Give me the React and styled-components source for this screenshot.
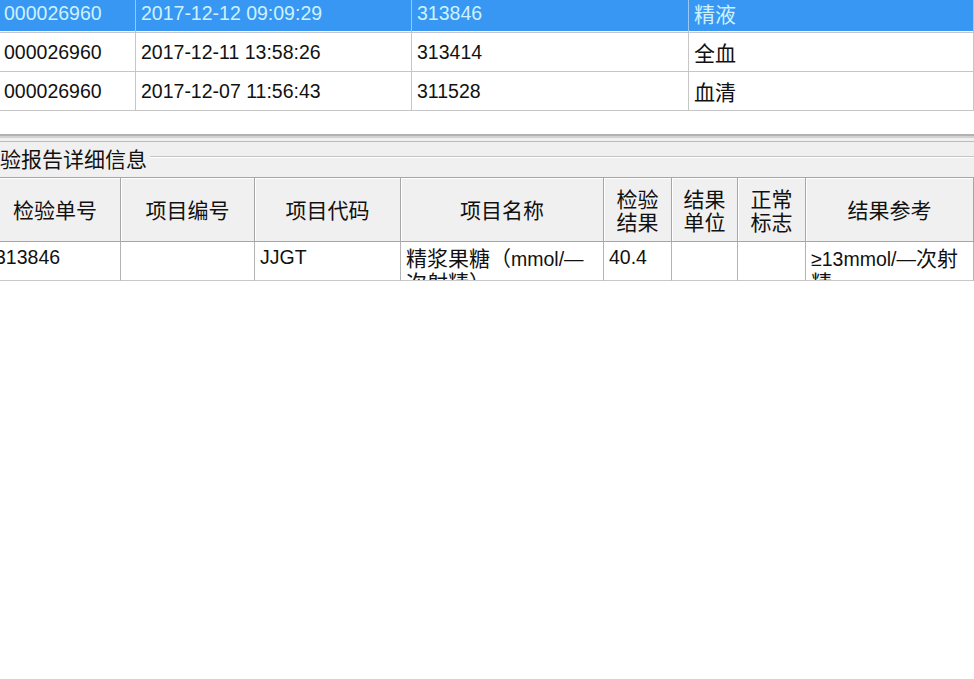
import React from 'react';
import styled, { createGlobalStyle } from 'styled-components';

const Global = createGlobalStyle`
  html, body { margin: 0; padding: 0; background: #fff; overflow: hidden; }
  body { font-family: "Liberation Sans", "Noto Sans CJK SC", sans-serif; color: #111; }
  * { box-sizing: border-box; }
`;

const Page = styled.div`
  width: 974px;
  height: 679px;
  overflow: hidden;
  display: flex;
  flex-direction: column;
  background: #fff;
`;

const ListGrid = styled.div`
  display: grid;
  grid-template-columns: 136px 276px 277px 1fr;
  margin-top: -6px;
  flex: none;
`;

const ListCell = styled.div`
  height: 39px;
  display: flex;
  align-items: center;
  padding-left: ${p => (p.$first ? 4 : 5)}px;
  font-size: 19.5px;
  white-space: nowrap;
  border-right: 1px solid ${p => (p.$sel ? '#9cc8f4' : '#c6c6c6')};
  border-bottom: 1px solid #c6c6c6;
  background: ${p => (p.$sel ? '#3797f3' : '#fff')};
  color: ${p => (p.$sel ? '#cdf2ff' : '#111')};
  box-shadow: ${p => (p.$sel ? 'inset 0 -1px 0 #fff' : 'none')};
`;

const Cjk = styled.span`
  font-family: "Noto Sans CJK SC", sans-serif;
  font-size: 21px;
`;

const WhiteGap = styled.div`
  height: 23px;
  flex: none;
  background: #fff;
`;

const Splitter = styled.div`
  height: 4px;
  flex: none;
  background: linear-gradient(#b2b2b2 0 2px, #d2d2d2 2px 4px);
`;

const Panel = styled.div`
  flex: none;
  background: #f0f0f0;
  padding-top: 3px;
  display: flex;
  flex-direction: column;
`;

const PanelRule = styled.div`
  height: 1px;
  background: #bcbcbc;
`;

const GroupHead = styled.div`
  height: 35px;
  display: flex;
  align-items: flex-start;
`;

const GroupTitle = styled.div`
  margin-left: -21px;
  margin-top: 4px;
  font-family: "Noto Sans CJK SC", sans-serif;
  font-size: 21px;
  line-height: 24px;
  white-space: nowrap;
  color: #111;
`;

const GroupLine = styled.div`
  flex: 1;
  margin-top: 14px;
  margin-left: 3px;
  height: 2px;
  border-top: 1px solid #c4c4c4;
  border-bottom: 1px solid #fff;
`;

const DetailGrid = styled.div`
  display: grid;
  grid-template-columns: 131px 134px 146px 203px 68px 66px 68px 168px;
  margin-left: -10px;
  border-top: 1px solid #a6a6a6;
`;

const HeadCell = styled.div`
  height: 64px;
  display: flex;
  align-items: center;
  justify-content: center;
  text-align: center;
  font-family: "Noto Sans CJK SC", sans-serif;
  font-size: 21px;
  line-height: 23px;
  background: #f0f0f0;
  border-right: 1px solid #a6a6a6;
  border-bottom: 1px solid #a6a6a6;
  box-shadow: inset 1px 1px 0 #fff;
  color: #111;
`;

const HeadLine = styled.div`
  white-space: nowrap;
`;

const DataCell = styled.div`
  height: 39px;
  overflow: hidden;
  padding: 4px 4px 0 5px;
  font-size: 19.5px;
  line-height: 22px;
  background: #fff;
  border-right: 1px solid #b4b4b4;
  border-bottom: 1px solid #c8c8c8;
  color: #111;
`;

const Filler = styled.div`
  flex: 1;
  background: #fff;
`;

const listRows = [
  { id: '000026960', time: '2017-12-12 09:09:29', no: '313846', kind: '精液', sel: true },
  { id: '000026960', time: '2017-12-11 13:58:26', no: '313414', kind: '全血' },
  { id: '000026960', time: '2017-12-07 11:56:43', no: '311528', kind: '血清' },
];

const headers = [
  ['检验单号'],
  ['项目编号'],
  ['项目代码'],
  ['项目名称'],
  ['检验', '结果'],
  ['结果', '单位'],
  ['正常', '标志'],
  ['结果参考'],
];

export default function App() {
  return (
    <Page>
      <Global />
      <ListGrid>
        {listRows.map((r, i) => (
          <React.Fragment key={i}>
            <ListCell $first $sel={r.sel}>{r.id}</ListCell>
            <ListCell $sel={r.sel}>{r.time}</ListCell>
            <ListCell $sel={r.sel}>{r.no}</ListCell>
            <ListCell $sel={r.sel}><Cjk>{r.kind}</Cjk></ListCell>
          </React.Fragment>
        ))}
      </ListGrid>
      <WhiteGap />
      <Splitter />
      <Panel>
        <PanelRule />
        <GroupHead>
          <GroupTitle>检验报告详细信息</GroupTitle>
          <GroupLine />
        </GroupHead>
        <DetailGrid>
          {headers.map((h, i) => (
            <HeadCell key={i}>
              <div>
                {h.map((line, j) => (
                  <HeadLine key={j}>{line}</HeadLine>
                ))}
              </div>
            </HeadCell>
          ))}
          <DataCell>313846</DataCell>
          <DataCell />
          <DataCell>JJGT</DataCell>
          <DataCell>
            <Cjk>精浆果糖（</Cjk>mmol/—<Cjk>次射精）</Cjk>
          </DataCell>
          <DataCell>40.4</DataCell>
          <DataCell />
          <DataCell />
          <DataCell>
            ≥13mmol/—<Cjk>次射精</Cjk>
          </DataCell>
        </DetailGrid>
      </Panel>
      <Filler />
    </Page>
  );
}
